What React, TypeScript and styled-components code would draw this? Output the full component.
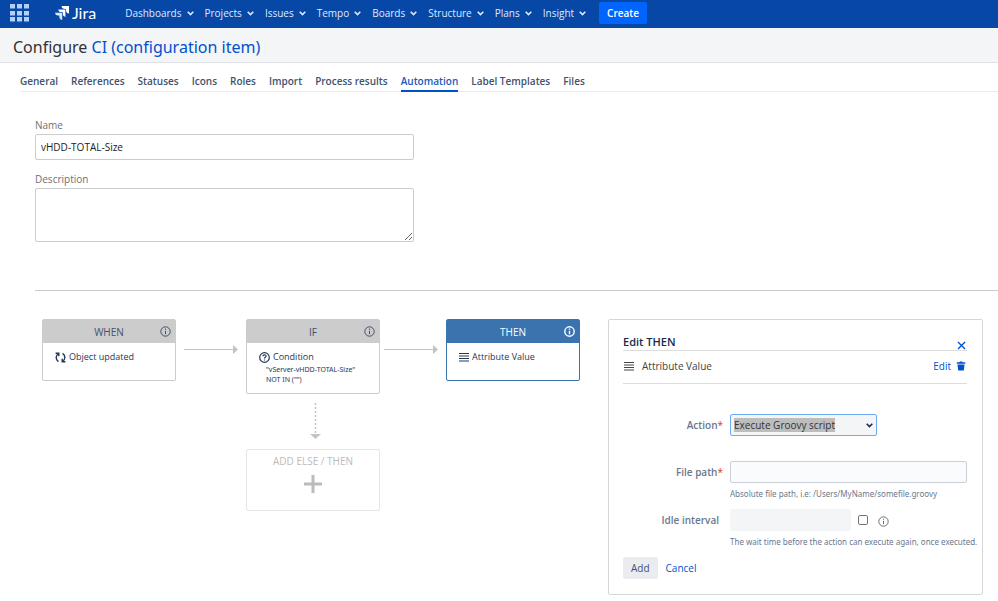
import React from 'react';
import styled, { createGlobalStyle, css } from 'styled-components';

const GlobalStyle = createGlobalStyle`
  *, *::before, *::after { box-sizing: border-box; }
  body {
    margin: 0;
    background: #fff;
    color: #172b4d;
    font: 10px/16px "Open Sans", "Noto Sans", sans-serif;
  }
  button, input, select, textarea { font: inherit; color: inherit; margin: 0; }
  a { text-decoration: none; color: #0052cc; }
  svg { display: block; flex: none; }
`;

const TopBar = styled.header`
  display: flex;
  align-items: center;
  height: 28px;
  padding: 0 10px 2px;
  background: #0747a6;
  color: #deebff;
`;

const IconButton = styled.button`
  display: flex;
  padding: 0;
  border: 0;
  background: none;
  color: #0052cc;
  cursor: pointer;
`;

const Brand = styled.a`
  display: flex;
  align-items: center;
  gap: 3px;
  margin-left: 26px;
  color: #fff;
  font: 16px/24px Lato, "Noto Sans", sans-serif;
`;

const MainNav = styled.nav`
  display: flex;
  align-items: center;
  gap: 11px;
  margin-left: 29px;
`;

const MenuButton = styled.button`
  display: flex;
  align-items: center;
  gap: 5px;
  padding: 0;
  border: 0;
  background: none;
  color: #deebff;
  white-space: nowrap;
  cursor: pointer;
`;

const CreateButton = styled.button`
  height: 22px;
  margin-left: 13px;
  padding: 0 8px;
  border: 0;
  border-radius: 2px;
  background: #0065ff;
  color: #fff;
  font-weight: 600;
  cursor: pointer;
`;

const TitleBar = styled.div`
  padding: 7px 13px 3px;
  border-bottom: 1px solid #dfe1e6;
  background: #f4f5f7;
`;

const Title = styled.h1`
  margin: 0;
  color: #333;
  font: 400 16px/24px "Noto Sans", sans-serif;
`;

const Tabs = styled.nav`
  display: flex;
  gap: 13px;
  margin-left: 20px;
  padding-top: 10px;
  border-bottom: 1px solid #ebecf0;
`;

const Tab = styled.a<{ $active?: boolean }>`
  margin-bottom: -1px;
  padding-bottom: 1px;
  border-bottom: 2px solid ${(p) => (p.$active ? '#0052cc' : 'transparent')};
  color: ${(p) => (p.$active ? '#2158bd' : '#42526e')};
  font-weight: 600;
  white-space: nowrap;
`;

const Details = styled.section`
  margin: 25px 0 0 35px;
  padding-bottom: 48px;
  border-bottom: 1px solid #ccc;
`;

const Field = styled.div`
  display: flex;
  flex-direction: column;
  gap: 1px;
  width: 38vw;
  min-width: 240px;
  & + & { margin-top: 11px; }
`;

const FieldLabel = styled.label`
  color: #707070;
`;

const fieldBox = css`
  width: 100%;
  padding: 0 5px;
  border: 1px solid #ccc;
  border-radius: 2px;
  background: #fff;
  color: #222;
`;

const TextInput = styled.input`
  ${fieldBox}
  height: 26px;
`;

const TextArea = styled.textarea`
  ${fieldBox}
  height: 54px;
  resize: vertical;
`;

const Workspace = styled.main`
  display: flex;
  align-items: flex-start;
  gap: 28px;
  padding: 28px 15px 6px 42px;
`;

const Flow = styled.div`
  display: flex;
  align-items: flex-start;
  flex: none;
`;

const Branch = styled.div`
  display: flex;
  flex-direction: column;
  align-items: center;
`;

const Step = styled.section<{ $selected?: boolean }>`
  width: 134px;
  min-height: 62px;
  padding-bottom: 8px;
  border: 1px solid ${(p) => (p.$selected ? '#3b73af' : '#ccc')};
  border-radius: 2px;
  color: #253858;
`;

const StepHeader = styled.header<{ $selected?: boolean }>`
  display: grid;
  grid-template-columns: 1fr auto 1fr;
  align-items: center;
  height: 23px;
  padding: 0 4px;
  background: ${(p) => (p.$selected ? '#3b73af' : '#ccc')};
  color: ${(p) => (p.$selected ? '#fff' : '#42526e')};
  & > svg { grid-column: 3; justify-self: end; }
`;

const StepTitle = styled.h2`
  grid-column: 2;
  margin: 0;
  font-size: 10px;
  font-weight: 400;
`;

const StepLine = styled.div`
  display: flex;
  align-items: center;
  gap: 3px;
  padding: 6px 12px 0;
  font-size: 9px;
  line-height: 16px;
  white-space: nowrap;
`;

const StepDetail = styled.p`
  margin: 0;
  padding-left: 19px;
  font: 7px/10px "Noto Sans", sans-serif;
`;

const HorizontalLink = styled.div<{ $wide?: boolean }>`
  padding: 26px 8px 0 ${(p) => (p.$wide ? '8px' : '4px')};
`;

const VerticalLink = styled.div`
  padding: 9px 0 10px 4px;
`;

const AddStep = styled.button`
  display: flex;
  flex-direction: column;
  align-items: center;
  gap: 6px;
  width: 134px;
  height: 62px;
  padding: 3px 0 0;
  border: 1px solid #e4e4e4;
  border-radius: 2px;
  background: #fff;
  color: #bbb;
  cursor: pointer;
`;

const Panel = styled.aside`
  flex: 1;
  min-width: 340px;
  padding: 14px 15px 15px 14px;
  border: 1px solid #d6d6d6;
  border-radius: 2px;
`;

const PanelHeader = styled.header`
  display: flex;
  align-items: center;
  justify-content: space-between;
  padding-right: 1px;
  border-bottom: 1px solid #ddd;
`;

const PanelTitle = styled.h2`
  margin: 0;
  font-size: 11px;
  font-weight: 600;
  line-height: 16px;
`;

const CloseButton = styled(IconButton)`
  align-self: flex-end;
`;

const ActionRow = styled.div`
  display: flex;
  align-items: center;
  gap: 8px;
  padding: 7px 1px 9px;
  border-bottom: 1px solid #ddd;
  color: #444;
`;

const RowTools = styled.div`
  display: flex;
  align-items: center;
  gap: 5px;
  margin-left: auto;
`;

const Form = styled.form`
  display: grid;
  grid-template-columns: 100px minmax(0, 1fr);
  column-gap: 7px;
  padding-top: 30px;
`;

const FormLabel = styled.label<{ $optional?: boolean }>`
  padding: 3px ${(p) => (p.$optional ? '4px' : '0')} 0 0;
  color: #6b778c;
  font-weight: 600;
  text-align: right;
`;

const Required = styled.span`
  color: #de350b;
  font-weight: 400;
`;

const Control = styled.div<{ $gap?: number }>`
  margin-bottom: ${(p) => p.$gap ?? 0}px;
`;

const SelectWrap = styled.div`
  display: grid;
  width: 147px;
  align-items: center;
  & > * { grid-area: 1 / 1; }
  & > svg { justify-self: end; margin-right: 4px; pointer-events: none; }
`;

const Select = styled.select`
  appearance: none;
  width: 100%;
  height: 22px;
  padding: 0 3px;
  border: 1px solid #6fabf5;
  border-radius: 2px;
  background: linear-gradient(#bdbdbd, #bdbdbd) 3px 3px / 101px 14px no-repeat #f4f5f7;
  color: #333;
  outline: 0;
`;

const PathInput = styled.input`
  width: 100%;
  height: 22px;
  padding: 0 5px;
  border: 1px solid #ccd0d8;
  border-radius: 2px;
  background: #fafbfc;
`;

const IntervalRow = styled.div`
  display: flex;
  align-items: center;
  gap: 7px;
`;

const IntervalInput = styled.input`
  width: 121px;
  height: 22px;
  padding: 0 5px;
  border: 0;
  border-radius: 2px;
  background: #f4f5f7;
`;

const Check = styled.input`
  appearance: none;
  width: 10px;
  height: 10px;
  border: 1px solid #767676;
  border-radius: 2px;
  background: #fff;
  &:checked { background: #0052cc; }
`;

const InfoButton = styled(IconButton)`
  margin: 2px 0 0 3px;
  color: #707070;
`;

const Hint = styled.p`
  margin: 3px 0 0;
  color: #6b778c;
  font: 8px/16px "Noto Sans", sans-serif;
  white-space: nowrap;
`;

const FormActions = styled.div`
  display: flex;
  align-items: center;
  gap: 8px;
`;

const AddButton = styled.button`
  height: 22px;
  padding: 0 8px;
  border: 0;
  border-radius: 2px;
  background: #ebecf0;
  color: #42526e;
  cursor: pointer;
`;

const GridIcon = () => (
  <svg width="19" height="18" viewBox="0 0 19 18" fill="#b3d0fb" aria-hidden="true">
    {[0, 7, 14].map((x) => [0, 7, 13].map((y) => <rect key={`${x}-${y}`} x={x} y={y} width="5" height="4.5" />))}
  </svg>
);

const JiraMark = () => (
  <svg width="14" height="14" viewBox="0 0 14 14" aria-hidden="true">
    <path fill="#fff" d="M6.600 0H14v7.400c-1.900 0-3-1.400-3-3V3H9.600c-1.600 0-3-1.200-3-3Z" />
    <path fill="#fff" d="M3.300 3.300h7.400v7.400c-1.900 0-3-1.400-3-3V6.300H6.300c-1.600 0-3-1.200-3-3Z" />
    <path fill="#deebff" d="M0 6.600h7.400V14c-1.900 0-3-1.400-3-3V9.600H3c-1.600 0-3-1.200-3-3Z" />
    <path fill="none" stroke="#0747a6" strokeWidth=".5" d="M3.300 3.300h7.400v7.400M0 6.600h7.400V14" />
  </svg>
);

const Chevron = () => (
  <svg width="7" height="5" viewBox="0 0 7 5" fill="none" stroke="currentColor" strokeWidth="1.600" aria-hidden="true">
    <path d="M.7.7 3.500 3.500 6.300.7" />
  </svg>
);

const InfoIcon = ({ bold }: { bold?: boolean }) => (
  <svg width="11" height="11" viewBox="0 0 11 11" fill="none" stroke="currentColor" strokeWidth={bold ? 1.4 : 1} aria-hidden="true">
    <circle cx="5.500" cy="5.500" r="4.700" />
    <path d="M5.500 4.800v3.400M5.500 2.600v1.200" />
  </svg>
);

const CycleIcon = () => (
  <svg width="11" height="11" viewBox="0 0 11 11" fill="none" stroke="currentColor" strokeWidth="1.400" aria-hidden="true">
    <path d="M.6 1.300H3.800V4.200M3.600 1.500C.4 3.600.4 7.400 3.400 9.600M10.400 9.700H7.200V6.800M7.400 9.500C10.600 7.400 10.600 3.600 7.600 1.400" />
  </svg>
);

const QuestionIcon = () => (
  <svg width="11" height="11" viewBox="0 0 11 11" fill="none" stroke="currentColor" strokeWidth="1.200" aria-hidden="true">
    <circle cx="5.500" cy="5.500" r="4.800" />
    <path d="M3.900 4.300c0-2 3.200-2 3.200-.1 0 1.100-1.600 1.100-1.600 2.300M5.500 7.400v1.100" />
  </svg>
);

const LinesIcon = () => (
  <svg width="10" height="9" viewBox="0 0 10 9" fill="none" stroke="currentColor" aria-hidden="true">
    <path d="M0 .5h10M0 3h10M0 5.500h10M0 8h10" />
  </svg>
);

const CloseIcon = () => (
  <svg width="9" height="9" viewBox="0 0 9 9" fill="none" stroke="currentColor" strokeWidth="1.400" aria-hidden="true">
    <path d="m1 1 7 7M8 1 1 8" />
  </svg>
);

const TrashIcon = () => (
  <svg width="10" height="10" viewBox="0 0 10 10" fill="currentColor" aria-hidden="true">
    <path d="M.8 1.200h2.500L4 .4h2l.7.8h2.500v1.500H.8ZM1.500 3.400h7L7.800 9.600H2.200Z" />
  </svg>
);

const PlusIcon = () => (
  <svg width="18" height="18" viewBox="0 0 18 18" fill="none" stroke="currentColor" strokeWidth="3" aria-hidden="true">
    <path d="M9 0v18M0 9h18" />
  </svg>
);

const ArrowRight = () => (
  <svg width="54" height="9" viewBox="0 0 54 9" aria-hidden="true">
    <path d="M0 4.500h49" stroke="#c4c4c4" />
    <path d="M49 0v9l5-4.500Z" fill="#c4c4c4" />
  </svg>
);

const ArrowDown = () => (
  <svg width="11" height="36" viewBox="0 0 11 36" aria-hidden="true">
    <path d="M5.500 0v31" stroke="#c4c4c4" strokeWidth="1.500" strokeDasharray="2 2" />
    <path d="M0 31h11L5.500 36Z" fill="#c4c4c4" />
  </svg>
);

const menus = ['Dashboards', 'Projects', 'Issues', 'Tempo', 'Boards', 'Structure', 'Plans', 'Insight'];
const tabs = ['General', 'References', 'Statuses', 'Icons', 'Roles', 'Import', 'Process results', 'Automation', 'Label Templates', 'Files'];

export default function App() {
  return (
    <>
      <GlobalStyle />
      <TopBar>
        <IconButton aria-label="Applications"><GridIcon /></IconButton>
        <Brand href="#"><JiraMark />Jira</Brand>
        <MainNav>
          {menus.map((name) => <MenuButton key={name}>{name}<Chevron /></MenuButton>)}
        </MainNav>
        <CreateButton>Create</CreateButton>
      </TopBar>
      <TitleBar>
        <Title>Configure <a href="#">CI (configuration item)</a></Title>
      </TitleBar>
      <Tabs>
        {tabs.map((name) => <Tab key={name} href="#" $active={name === 'Automation'}>{name}</Tab>)}
      </Tabs>
      <Details>
        <Field>
          <FieldLabel htmlFor="name">Name</FieldLabel>
          <TextInput id="name" defaultValue="vHDD-TOTAL-Size" />
        </Field>
        <Field>
          <FieldLabel htmlFor="description">Description</FieldLabel>
          <TextArea id="description" />
        </Field>
      </Details>
      <Workspace>
        <Flow>
          <Step>
            <StepHeader><StepTitle>WHEN</StepTitle><InfoIcon /></StepHeader>
            <StepLine><CycleIcon />Object updated</StepLine>
          </Step>
          <HorizontalLink $wide><ArrowRight /></HorizontalLink>
          <Branch>
            <Step>
              <StepHeader><StepTitle>IF</StepTitle><InfoIcon /></StepHeader>
              <StepLine><QuestionIcon />Condition</StepLine>
              <StepDetail>"vServer-vHDD-TOTAL-Size"<br />NOT IN ("")</StepDetail>
            </Step>
            <VerticalLink><ArrowDown /></VerticalLink>
            <AddStep>ADD ELSE / THEN<PlusIcon /></AddStep>
          </Branch>
          <HorizontalLink><ArrowRight /></HorizontalLink>
          <Step $selected>
            <StepHeader $selected><StepTitle>THEN</StepTitle><InfoIcon bold /></StepHeader>
            <StepLine><LinesIcon />Attribute Value</StepLine>
          </Step>
        </Flow>
        <Panel>
          <PanelHeader>
            <PanelTitle>Edit THEN</PanelTitle>
            <CloseButton aria-label="Close"><CloseIcon /></CloseButton>
          </PanelHeader>
          <ActionRow>
            <LinesIcon />Attribute Value
            <RowTools>
              <a href="#">Edit</a>
              <IconButton aria-label="Delete"><TrashIcon /></IconButton>
            </RowTools>
          </ActionRow>
          <Form onSubmit={(e) => e.preventDefault()}>
            <FormLabel htmlFor="action">Action<Required>*</Required></FormLabel>
            <Control $gap={25}>
              <SelectWrap>
                <Select id="action"><option>Execute Groovy script</option></Select>
                <Chevron />
              </SelectWrap>
            </Control>
            <FormLabel htmlFor="path">File path<Required>*</Required></FormLabel>
            <Control $gap={7}>
              <PathInput id="path" />
              <Hint>Absolute file path, i.e: /Users/MyName/somefile.groovy</Hint>
            </Control>
            <FormLabel htmlFor="interval" $optional>Idle interval</FormLabel>
            <Control $gap={7}>
              <IntervalRow>
                <IntervalInput id="interval" disabled />
                <Check type="checkbox" aria-label="Use idle interval" />
                <InfoButton type="button" aria-label="About idle interval"><InfoIcon /></InfoButton>
              </IntervalRow>
              <Hint>The wait time before the action can execute again, once executed.</Hint>
            </Control>
            <FormActions>
              <AddButton type="submit">Add</AddButton>
              <a href="#">Cancel</a>
            </FormActions>
          </Form>
        </Panel>
      </Workspace>
    </>
  );
}
